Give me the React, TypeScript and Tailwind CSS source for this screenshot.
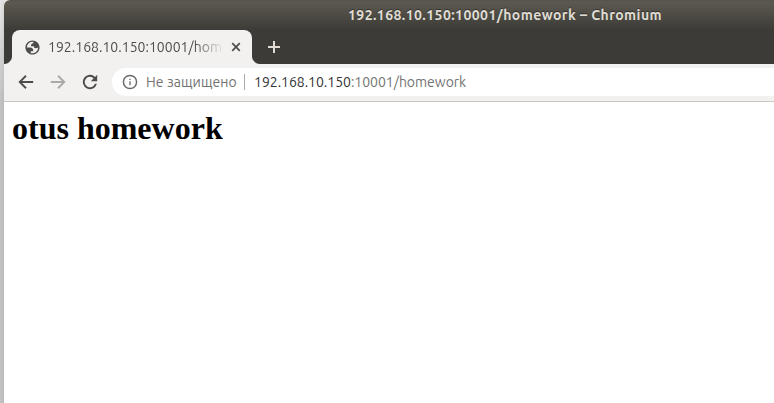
import type { ReactNode } from 'react';

const UI_FONT = "font-['Ubuntu','Noto_Sans',sans-serif]";

function Icon({ size, className = '', children }: { size: number; className?: string; children: ReactNode }) {
  return (
    <svg width={size} height={size} viewBox="0 0 24 24" fill="currentColor" className={`block shrink-0 ${className}`}>
      {children}
    </svg>
  );
}

function Tab() {
  return (
    <div className="flex h-[34px] items-end">
      <div className="h-2 w-2 bg-[radial-gradient(circle_at_0_0,transparent_7.5px,#f2f1f0_8.5px)]" />
      <div className="flex h-full w-[240px] items-center rounded-t-lg bg-[#f2f1f0] pl-[11.5px] text-[#4c4c4a]">
        <Icon size={17}>
          <path
            d="M12 2C6.480 2 2 6.480 2 12s4.480 10 10 10 10-4.480 10-10S17.520 2 12 2zM4 12h4.400c3.407.022 4.922 1.730 4.545 5.127H9.488v2.470a8.004 8.004 0 0 0 10.498-8.083C19.327 12.504 18.332 13 17 13c-2.137 0-3.206-.916-3.206-2.750h-3.748c-.274-2.728.683-4.092 2.870-4.092 0-.975.327-1.597.811-1.970A8.004 8.004 0 0 0 4 12z"
            fillRule="evenodd"
          />
        </Icon>
        <div className="ml-[7.5px] h-5 w-[175px] overflow-hidden whitespace-nowrap text-[14px] leading-5 tracking-[0.02px] [mask-image:linear-gradient(to_right,black_146px,transparent_176px)]">
          192.168.10.150:10001/homework
        </div>
        <svg width="10" height="10" viewBox="0 0 10 10" className="ml-2 block" stroke="currentColor" strokeWidth="1.7" fill="none">
          <path d="M1.200 1.200 8.800 8.800M8.800 1.200 1.200 8.800" />
        </svg>
      </div>
      <div className="h-2 w-2 bg-[radial-gradient(circle_at_100%_0,transparent_7.5px,#f2f1f0_8.5px)]" />
    </div>
  );
}

export default function App() {
  return (
    <div className={`flex h-[403px] w-[774px] overflow-hidden bg-[linear-gradient(to_bottom,#e6e6e6,#c4c4c4_100px)] ${UI_FONT}`}>
      <div className="w-1 shrink-0 bg-gradient-to-r from-transparent to-black/5" />
      <div className="flex min-w-0 flex-1 flex-col overflow-hidden rounded-tl-[6px] bg-white">
        <header className="h-16 shrink-0 bg-[linear-gradient(to_bottom,#55534c_0,#5c5950_2px,#3c3b37_30px)]">
          <div className="h-[30px] pl-[344px] text-[14px] leading-[30px] font-bold whitespace-nowrap tracking-[0.43px] text-[#dfdbd2] [text-shadow:0_-1px_0_#33322e]">
            192.168.10.150:10001/homework – Chromium
          </div>
          <div className="flex items-center">
            <Tab />
            <svg width="12" height="12" viewBox="0 0 12 12" className="ml-2 block" stroke="#dfdbd2" strokeWidth="2">
              <path d="M6 0V12M0 6H12" />
            </svg>
          </div>
        </header>

        <nav className="flex h-[38px] shrink-0 items-center border-b border-[#c8c8c8] bg-[#f2f1f0] pb-px pl-3 text-[#4c4c4a]">
          <Icon size={20}>
            <path d="M20.600 10.800H7.300l5.500-5.500L11.200 3.700 2.900 12l8.300 8.300 1.600-1.600-5.500-5.500h13.300z" />
          </Icon>
          <Icon size={20} className="ml-3 text-[#aaa9a7]">
            <path d="M3.400 10.800h13.300l-5.500-5.500 1.600-1.600 8.300 8.300-8.300 8.300-1.600-1.600 5.500-5.500H3.400z" />
          </Icon>
          <Icon size={20} className="ml-3">
            <path d="M18.100 5.900A8.600 8.600 0 1 0 20.300 14.200h-2.400A6.300 6.300 0 1 1 16.400 7.600L13 11h7.600V3.400z" />
          </Icon>
          <div className="ml-3 flex h-7 flex-1 items-center rounded-l-full bg-white pl-[10px] text-[14px] leading-5 whitespace-nowrap">
            <Icon size={16} className="text-[#6b6b6a]">
              <path d="M11 7h2v2h-2zm0 4h2v6h-2zm1-10a11 11 0 1 0 0 22 11 11 0 0 0 0-22zm0 19.800a8.800 8.800 0 1 1 0-17.600 8.800 8.800 0 0 1 0 17.600z" />
            </Icon>
            <span className="ml-2 w-[92px] tracking-[0.08px] text-[#737371]">Не защищено</span>
            <span className="ml-[6px] h-4 w-px bg-[#aaa]" />
            <span className="ml-[9px] text-[#737371] tracking-[-0.02px]">
              <span className="text-[#333]">192.168.10.150</span>:10001/homework
            </span>
          </div>
        </nav>

        <main className="flex-1 px-2 pt-2">
          <h1 className="font-['Liberation_Serif','Times_New_Roman',serif] text-[32px] leading-[37px] font-bold text-black">otus homework</h1>
        </main>
      </div>
    </div>
  );
}
